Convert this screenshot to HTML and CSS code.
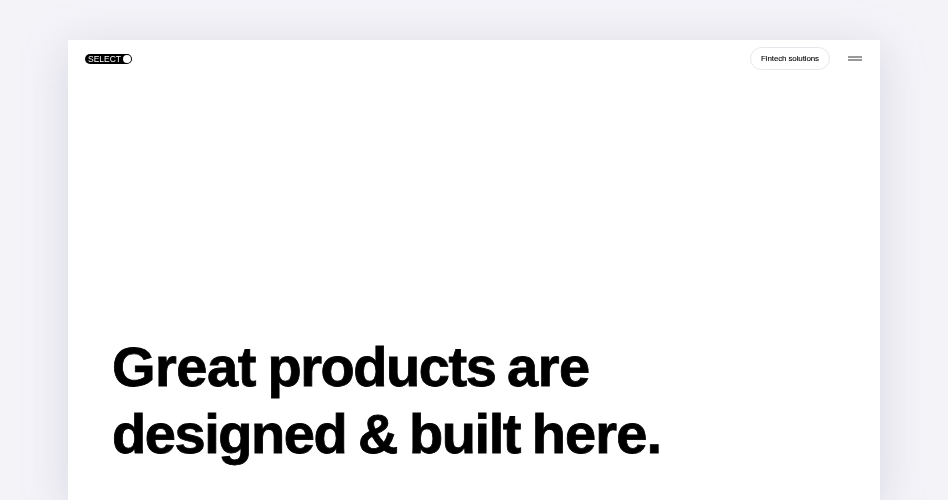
FILE: index.html
```html
<!DOCTYPE html>
<html lang="en">
<head>
<meta charset="utf-8">
<title>Selecto</title>
<link rel="stylesheet" href="styles.css">
</head>
<body>
<main class="window">
  <header class="topbar">
    <a class="logo"><span class="logo-word">SELECT</span><span class="logo-o"></span></a>
    <div class="actions">
      <a class="pill">Fintech solutions</a>
      <button class="menu" aria-label="Menu"><span></span><span></span></button>
    </div>
  </header>
  <section class="hero">
    <h1><span class="loose">Great</span> <span class="tight">products</span> <span class="loose">are</span><br><span class="tight">designed</span> &amp; <span class="tight">built</span> here.</h1>
  </section>
</main>
</body>
</html>
```

FILE: styles.css
```css
html, body {
  margin: 0;
  height: 100%;
  overflow: hidden;
}
body {
  background: #f3f3f8;
  padding: 40px 68px 0;
  box-sizing: border-box;
  font-family: "Liberation Sans", Arial, sans-serif;
  color: #000;
}
.window {
  width: 812px;
  height: 460px;
  background: #fff;
  box-shadow: 0 8px 40px rgba(165, 165, 185, 0.36);
  display: flex;
  flex-direction: column;
  justify-content: space-between;
}
.topbar {
  display: flex;
  justify-content: space-between;
  align-items: center;
  padding: 7px 18px 0 17px;
}
.logo {
  display: flex;
  align-items: center;
  justify-content: space-between;
  width: 47px;
  height: 10px;
  margin-top: 1px;
  padding: 0 1px 0 3px;
  box-sizing: border-box;
  background: #000;
  border-radius: 5px;
  color: #fff;
  will-change: transform;
}
.logo-word {
  font-size: 8.5px;
  line-height: 10px;
}
.logo-o {
  width: 8px;
  height: 8px;
  background: #fff;
  border-radius: 50%;
}
.actions {
  display: flex;
  align-items: center;
  gap: 18px;
}
.pill {
  width: 80px;
  height: 23px;
  box-sizing: border-box;
  border: 1px solid #e8e5ec;
  border-radius: 12px;
  display: flex;
  align-items: center;
  justify-content: center;
  font-size: 8px;
  letter-spacing: -0.13px;
  -webkit-text-stroke: 0.1px #000;
  color: #000;
  background: #fff;
  will-change: transform;
}
.menu {
  width: 14px;
  padding: 0;
  border: 0;
  background: none;
  display: flex;
  flex-direction: column;
  gap: 1px;
}
.menu span {
  height: 2px;
  background: #999;
  display: block;
  width: 14px;
}
.hero {
  padding: 0 0 33px 44px;
}
h1 {
  margin: 0;
  font-size: 56px;
  line-height: 67px;
  font-weight: 700;
  letter-spacing: -0.9px;
  word-spacing: -3px;
  -webkit-text-stroke: 0.8px #000;
  color: #000;
}
.loose {
  letter-spacing: -0.5px;
}
.tight {
  letter-spacing: -1.45px;
}
```
